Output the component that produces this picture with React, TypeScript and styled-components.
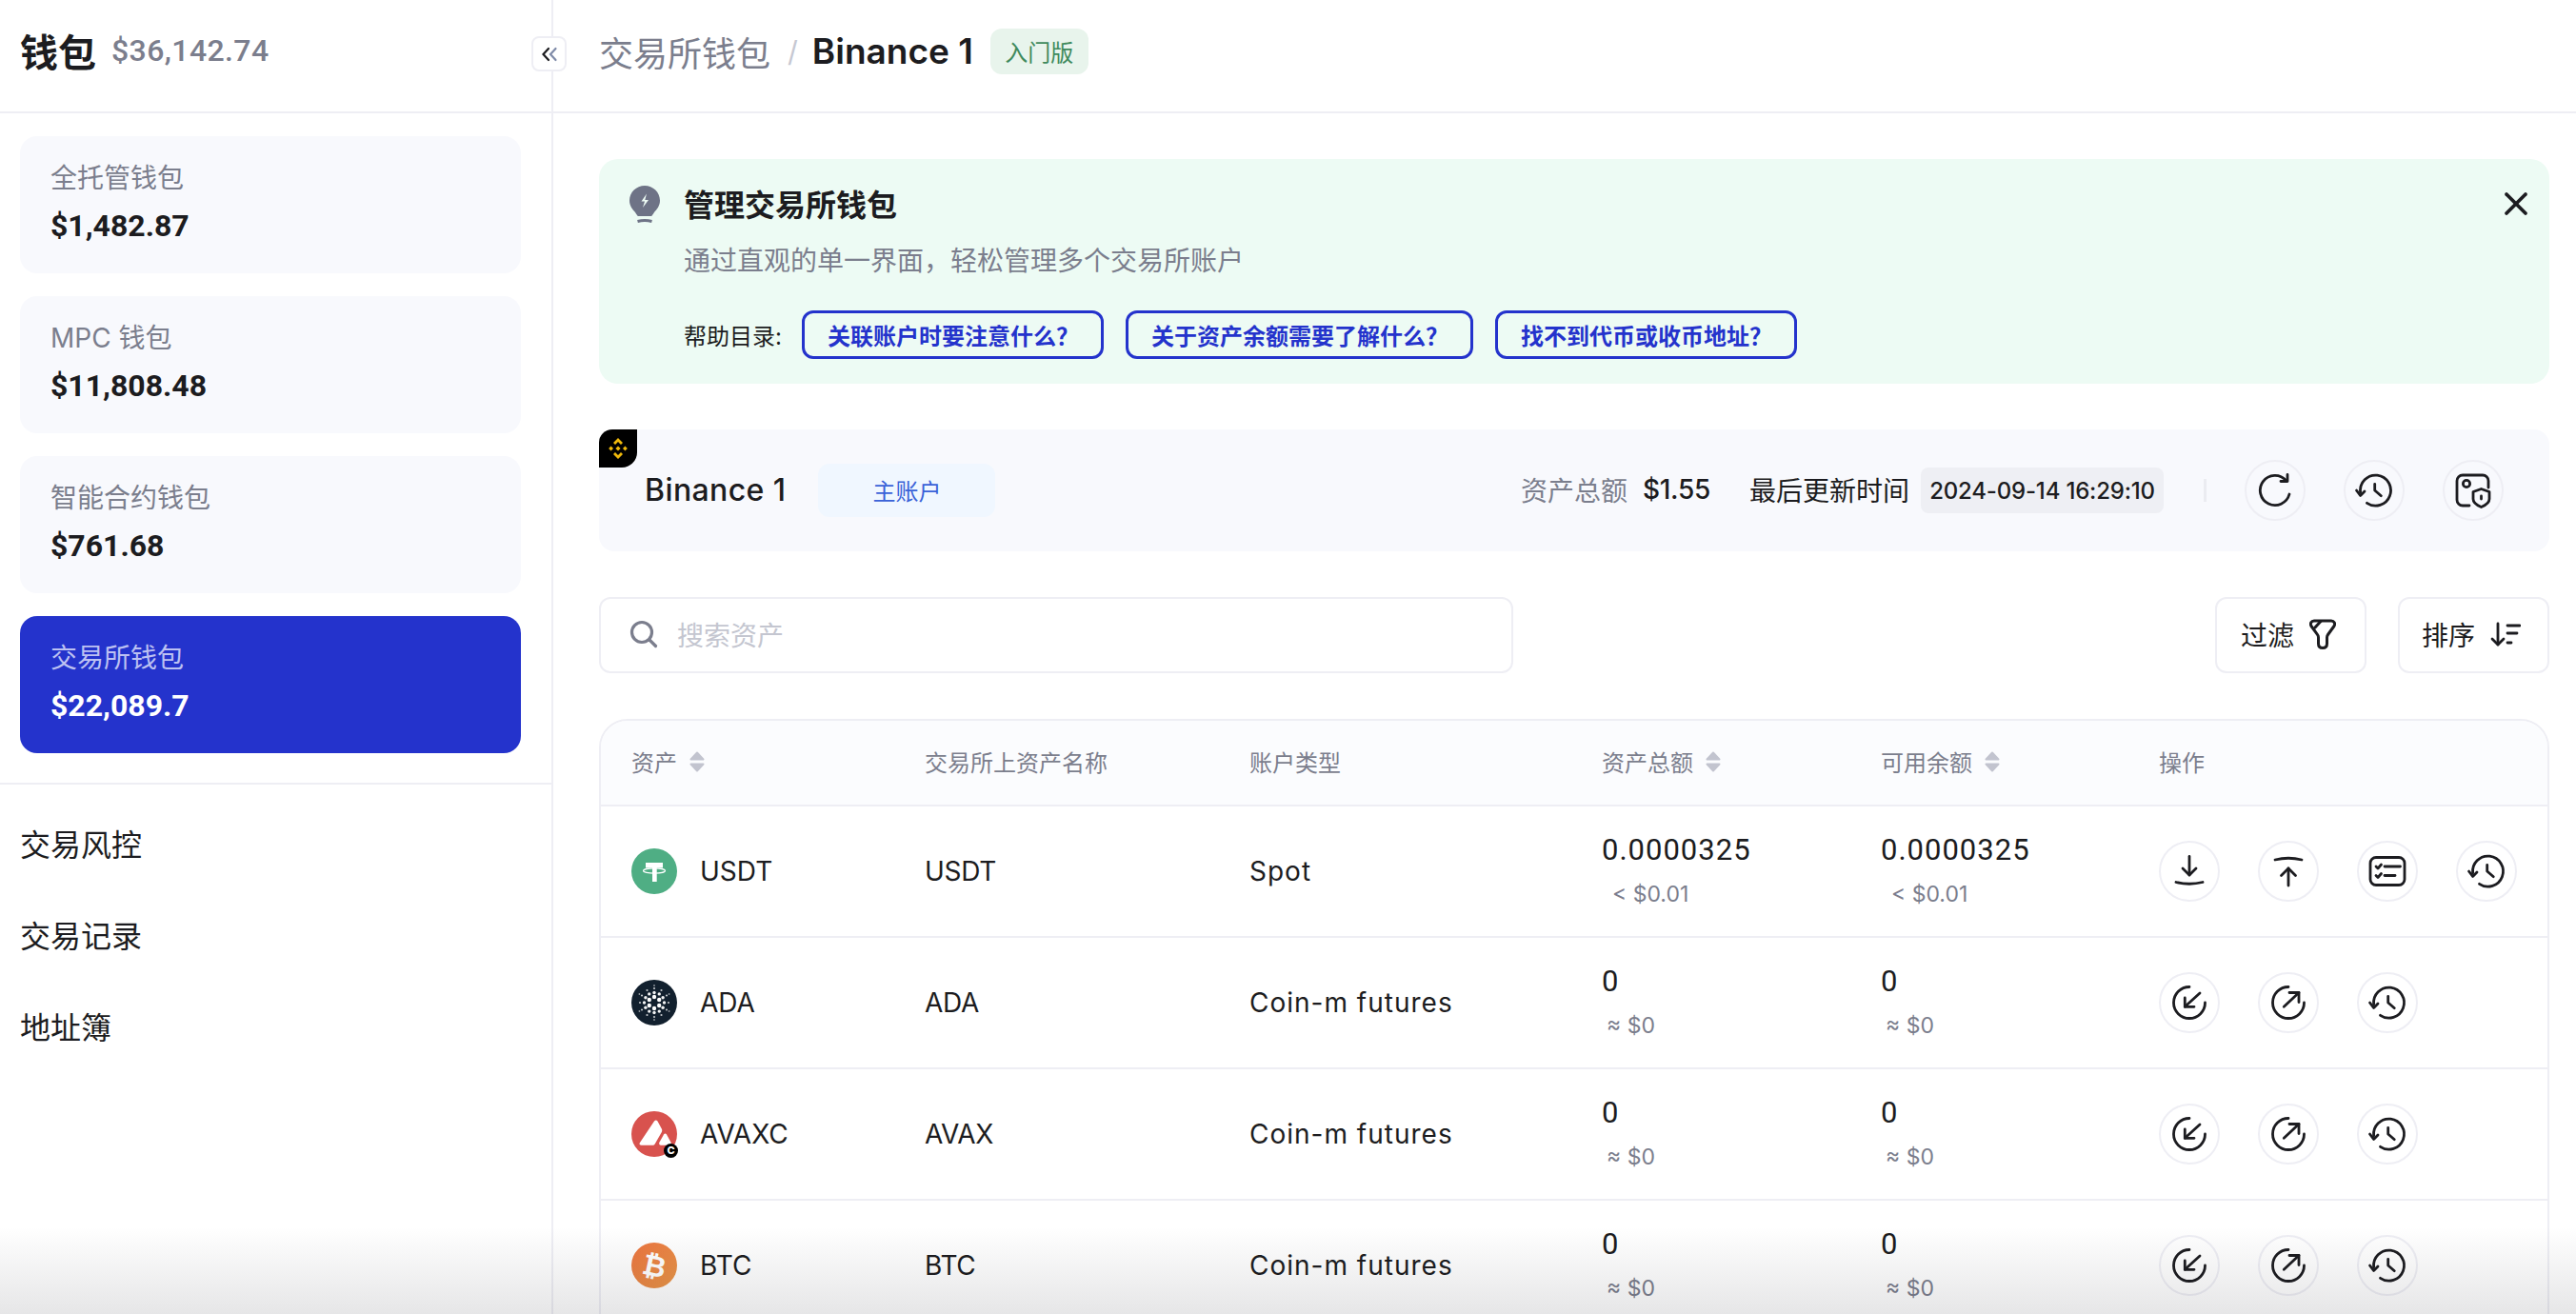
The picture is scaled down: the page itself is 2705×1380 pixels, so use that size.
import React from "react";
import styled, { createGlobalStyle } from "styled-components";

const INK = "#1c1c20";
const GREY = "#7b7e8d";
const LINE = "#eeeef4";
const BRAND = "#2433cc";
const SANS = `Inter, "Noto Sans CJK SC", sans-serif`;
const DIGITS = `Roboto, "Noto Sans CJK SC", sans-serif`;

const GlobalStyle = createGlobalStyle`
  html, body { margin: 0; padding: 0; background: #fff; }
  body { font-family: ${SANS}; color: ${INK}; }
  * { box-sizing: border-box; }
`;

const Page = styled.div`
  position: relative;
  display: flex;
  width: 2705px;
  height: 1380px;
  overflow: hidden;
`;

const BottomFade = styled.div`
  position: absolute;
  left: 0;
  right: 0;
  bottom: 0;
  height: 92px;
  background: linear-gradient(rgba(20, 20, 30, 0), rgba(20, 20, 30, 0.105));
  pointer-events: none;
`;

/* sidebar */
const Sidebar = styled.aside`
  position: relative;
  flex: 0 0 581px;
  border-right: 2px solid ${LINE};
`;

const SideHead = styled.div`
  display: flex;
  align-items: center;
  gap: 16px;
  height: 119px;
  padding: 0 21px 12px;
  border-bottom: 2px solid ${LINE};
`;

const SideTitle = styled.h1`
  margin: 0;
  font-size: 40px;
  font-weight: 700;
`;

const SideTotal = styled.span`
  font-family: ${DIGITS};
  font-size: 32px;
  font-weight: 500;
  letter-spacing: 0.4px;
  color: ${GREY};
`;

const CollapseButton = styled.button`
  position: absolute;
  top: 38px;
  left: 558px;
  display: flex;
  align-items: center;
  justify-content: center;
  width: 37px;
  height: 37px;
  padding: 0;
  background: #fff;
  border: 2px solid ${LINE};
  border-radius: 8px;
`;

const CardList = styled.div`
  display: flex;
  flex-direction: column;
  gap: 24px;
  padding: 24px 32px 31px 21px;
  border-bottom: 2px solid ${LINE};
`;

const WalletCard = styled.div<{ $active?: boolean }>`
  height: 144px;
  padding: 26px 32px;
  border-radius: 18px;
  background: ${(p) => (p.$active ? BRAND : "#f8f9fd")};
  color: ${(p) => (p.$active ? "#fff" : INK)};
`;

const CardLabel = styled.div<{ $active?: boolean }>`
  font-size: 28px;
  line-height: 36px;
  color: ${(p) => (p.$active ? "#bcc1f2" : GREY)};
`;

const CardValue = styled.div`
  margin-top: 12px;
  font-family: ${DIGITS};
  font-size: 32px;
  line-height: 40px;
  font-weight: 700;
`;

const Menu = styled.nav`
  padding-top: 16px;
`;

const MenuItem = styled.div`
  height: 96px;
  padding-left: 21px;
  font-size: 32px;
  line-height: 96px;
`;

/* main */
const Main = styled.main`
  flex: 1;
  min-width: 0;
`;

const TopBar = styled.header`
  display: flex;
  align-items: center;
  height: 119px;
  padding: 0 0 10px 48px;
  border-bottom: 2px solid ${LINE};
`;

const Crumb = styled.span`
  font-size: 36px;
  color: ${GREY};
`;

const CrumbSlash = styled.span`
  margin: 0 15px 0 18px;
  font-size: 30px;
  color: #c6c8d2;
`;

const CrumbCurrent = styled.span`
  font-size: 37px;
  font-weight: 600;
`;

const PlanBadge = styled.span`
  display: flex;
  align-items: center;
  justify-content: center;
  width: 103px;
  height: 48px;
  margin-left: 18px;
  font-size: 24px;
  color: #3f8a5c;
  background: #e8f4ec;
  border-radius: 12px;
`;

const Content = styled.div`
  display: flex;
  flex-direction: column;
  gap: 48px;
  padding: 48px 28px 0 48px;
`;

const Banner = styled.section`
  position: relative;
  height: 236px;
  padding: 26px 32px;
  background: #edfbf4;
  border-radius: 20px;
`;

const BannerHead = styled.div`
  display: flex;
  align-items: center;
  gap: 25px;
  height: 44px;
`;

const BannerTitle = styled.h2`
  margin: -4px 0 0;
  font-size: 32px;
  font-weight: 700;
`;

const BannerText = styled.p`
  margin: 17px 0 0 57px;
  font-size: 28px;
  line-height: 40px;
  color: ${GREY};
`;

const HelpRow = styled.div`
  display: flex;
  align-items: center;
  gap: 23px;
  margin: 32px 0 0 57px;
`;

const HelpLabel = styled.span`
  width: 101px;
  font-size: 24px;
  white-space: nowrap;
`;

const HelpLink = styled.a`
  display: flex;
  align-items: center;
  height: 51px;
  padding: 0 23px 0 24px;
  font-size: 24px;
  font-weight: 700;
  color: ${BRAND};
  border: 3px solid ${BRAND};
  border-radius: 12px;
`;

const CloseButton = styled.button`
  position: absolute;
  top: 34px;
  right: 22px;
  display: flex;
  padding: 0;
  background: none;
  border: 0;
`;

const AccountBar = styled.section`
  position: relative;
  display: flex;
  align-items: center;
  height: 128px;
  padding: 0 48px;
  background: #f8f9fd;
  border-radius: 16px;
`;

const ExchangeTag = styled.div`
  position: absolute;
  top: 0;
  left: 0;
  display: flex;
  align-items: center;
  justify-content: center;
  width: 40px;
  height: 40px;
  background: #000;
  border-radius: 14px 0 16px 0;
`;

const AccountName = styled.span`
  margin-top: -2px;
  font-size: 32px;
  font-weight: 500;
  letter-spacing: 0.4px;
`;

const AccountType = styled.span`
  display: flex;
  align-items: center;
  justify-content: center;
  width: 186px;
  height: 56px;
  margin-left: 34px;
  padding-bottom: 2px;
  font-size: 24px;
  color: #3a62d8;
  background: #f0f7ff;
  border-radius: 12px;
`;

const Spacer = styled.div`
  flex: 1;
`;

const StatLabel = styled.span<{ $dark?: boolean }>`
  margin-top: -2px;
  font-size: 28px;
  color: ${(p) => (p.$dark ? INK : GREY)};
`;

const StatValue = styled.span`
  margin: -2px 41px 0 16px;
  font-size: 28px;
  font-weight: 500;
  letter-spacing: -0.3px;
`;

const TimeChip = styled.span`
  display: flex;
  align-items: center;
  justify-content: center;
  width: 255px;
  height: 48px;
  margin-left: 12px;
  font-size: 24px;
  font-weight: 500;
  letter-spacing: -0.2px;
  background: #eeeff4;
  border-radius: 8px;
`;

const BarDivider = styled.span`
  width: 3px;
  height: 24px;
  margin: 0 40px 0 42px;
  background: #ebecf1;
`;

const IconRow = styled.div`
  display: flex;
  gap: 40px;
`;

const CircleButton = styled.button`
  display: flex;
  align-items: center;
  justify-content: center;
  flex: none;
  width: 64px;
  height: 64px;
  padding: 0;
  background: transparent;
  border: 2px solid ${LINE};
  border-radius: 50%;

  svg {
    overflow: visible;
  }
`;

const Toolbar = styled.div`
  display: flex;
  align-items: stretch;
  height: 80px;
`;

const SearchBox = styled.div`
  display: flex;
  align-items: center;
  gap: 20px;
  width: 960px;
  padding: 0 0 2px 30px;
  font-size: 28px;
  color: #c4c6d0;
  border: 2px solid ${LINE};
  border-radius: 12px;
`;

const ToolButton = styled.button<{ $gap?: number }>`
  display: flex;
  align-items: center;
  justify-content: center;
  gap: 16px;
  width: 159px;
  margin-left: ${(p) => p.$gap ?? 0}px;
  padding: 0 5px 2px 0;
  font-family: ${SANS};
  font-size: 28px;
  color: ${INK};
  background: #fff;
  border: 2px solid ${LINE};
  border-radius: 12px;
`;

const Table = styled.div`
  border: 2px solid ${LINE};
  border-radius: 30px 30px 0 0;
  overflow: hidden;
`;

const COLUMNS = "308px 341px 370px 293px 292px 1fr";

const HeadRow = styled.div`
  display: grid;
  grid-template-columns: ${COLUMNS};
  align-items: center;
  height: 90px;
  padding: 0 0 3px 32px;
  font-size: 24px;
  color: ${GREY};
  background: #fbfcfe;
  border-bottom: 2px solid ${LINE};
`;

const HeadCell = styled.div`
  display: flex;
  align-items: center;
  gap: 13px;
`;

const Row = styled.div`
  display: grid;
  grid-template-columns: ${COLUMNS};
  align-items: center;
  height: 138px;
  padding-left: 32px;
  font-size: 28px;
  border-bottom: 2px solid ${LINE};
`;

const AssetCell = styled.div`
  display: flex;
  align-items: center;
  gap: 24px;
`;

const ExchangeCell = styled.div`
  letter-spacing: -0.3px;
`;

const TypeCell = styled.div`
  letter-spacing: 1px;
`;

const CoinWrap = styled.div`
  position: relative;
  width: 48px;
  height: 48px;
`;

const CoinMark = styled.div`
  position: absolute;
  right: -1px;
  bottom: -1px;
  display: flex;
  align-items: center;
  justify-content: center;
  width: 15px;
  height: 15px;
  font-size: 11px;
  font-weight: 800;
  line-height: 1;
  color: #fff;
  background: #000;
  border-radius: 50%;
`;

const BitcoinCoin = styled.div`
  display: flex;
  align-items: center;
  justify-content: center;
  width: 48px;
  height: 48px;
  font-family: "DejaVu Sans", sans-serif;
  font-size: 30px;
  font-weight: 700;
  color: #fff;
  background: linear-gradient(135deg, #ec7440, #e99748);
  border-radius: 50%;

  span {
    transform: rotate(12deg);
  }
`;

const AmountCell = styled.div`
  display: flex;
  flex-direction: column;
  gap: 12px;
  margin-top: -2px;
`;

const Amount = styled.span`
  font-family: ${DIGITS};
  font-size: 31px;
  line-height: 38px;
  letter-spacing: 1px;
`;

const AmountSub = styled.span<{ $indent: number }>`
  margin-left: ${(p) => p.$indent}px;
  font-size: 23px;
  line-height: 30px;
  color: ${GREY};
`;

const Stroke = styled.svg.attrs({
  fill: "none",
  stroke: INK,
  strokeLinecap: "round",
  strokeLinejoin: "round",
})``;

const ICONS: Record<string, React.ReactNode> = {
  refresh: (
    <>
      <path d="M33 22A15.6 15.6 0 1 1 29.5 7.5" />
      <path d="M31 1.5V8.5H24" />
    </>
  ),
  history: (
    <>
      <path d="M10.5 31.3A16 16 0 1 0 3.6 20" />
      <path d="M-.5 18L3.6 23.5L8 19" />
      <path d="M18.7 11.3V18L25.3 23.7" />
    </>
  ),
  shield: (
    <>
      <path d="M14 34H7A6 6 0 0 1 1 28V8A6 6 0 0 1 7 2H28A6 6 0 0 1 34 8V15" />
      <circle cx="11" cy="11" r="3.6" />
      <path d="M26.5 16.5L35 19.5V27C35 31 31.5 33.5 26.5 35.5C21.5 33.5 18 31 18 27V19.5Z" />
      <path d="M26.5 24V27" />
    </>
  ),
  deposit: (
    <>
      <path d="M18 2.5V22" />
      <path d="M11 15L18 22L25 15" />
      <path d="M4 29.5Q18 33 32 29.5" />
    </>
  ),
  withdraw: (
    <>
      <path d="M4 6Q18 2.5 32 6" />
      <path d="M18 33V15" />
      <path d="M10.5 22.5L18 15L25.5 22.5" />
    </>
  ),
  list: (
    <>
      <rect x="0" y="3.5" width="36" height="29" rx="6" />
      <path d="M15 13H31.5" />
      <path d="M15 22.5H26" />
      <path d="M6 13L8 15L11.5 11" />
      <path d="M6 22.5L8 24.5L11.5 20.5" />
    </>
  ),
  receive: (
    <>
      <path d="M18 1.5A16.5 16.5 0 1 0 34.5 18" />
      <path d="M29 8L13.3 22.3" />
      <path d="M13.3 13V22.3H23" />
    </>
  ),
  send: (
    <>
      <path d="M18 1.5A16.5 16.5 0 1 0 34.5 18" />
      <path d="M13.3 22.3L29 7.5" />
      <path d="M19 7.5H29V17.5" />
    </>
  ),
};

const ActionIcon = ({ name }: { name: string }) => (
  <CircleButton>
    <Stroke width={36} height={36} viewBox="0 0 36 36" strokeWidth={2.8}>
      {ICONS[name]}
    </Stroke>
  </CircleButton>
);

const SortCaret = () => (
  <svg width="16" height="22" viewBox="0 0 16 22" fill="#c2c4cf" stroke="#c2c4cf" strokeWidth="2" strokeLinejoin="round">
    <path d="M8 1.5L14.5 8.5H1.5Z" />
    <path d="M8 20.5L1.5 13.5H14.5Z" />
  </svg>
);

const TetherCoin = () => (
  <svg width="48" height="48" viewBox="0 0 48 48">
    <circle cx="24" cy="24" r="24" fill="#4fae84" />
    <path d="M15 15H33V20.5H26.7V35H22V20.5H15Z" fill="#fff" />
    <ellipse cx="24" cy="23.5" rx="11.5" ry="2.6" fill="none" stroke="#fff" strokeWidth="1.2" />
  </svg>
);

const CardanoCoin = () => {
  const dots: React.ReactNode[] = [];
  // rings of dots, getting smaller toward the rim
  [
    { r: 6, n: 6, s: 2.2, o: 1 },
    { r: 10.5, n: 12, s: 1.7, o: 0.95 },
    { r: 15, n: 12, s: 1.1, o: 0.75 },
    { r: 18, n: 6, s: 0.9, o: 0.55 },
  ].forEach((ring) => {
    for (let i = 0; i < ring.n; i++) {
      const a = (i / ring.n) * Math.PI * 2 + Math.PI / 6;
      dots.push(
        <circle
          key={`${ring.r}-${i}`}
          cx={24 + ring.r * Math.cos(a)}
          cy={24 + ring.r * Math.sin(a)}
          r={ring.s}
          fill="#fff"
          opacity={ring.o}
        />,
      );
    }
  });
  return (
    <svg width="48" height="48" viewBox="0 0 48 48">
      <circle cx="24" cy="24" r="24" fill="#12202e" />
      {dots}
    </svg>
  );
};

const AvalancheCoin = () => (
  <svg width="48" height="48" viewBox="0 0 48 48">
    <circle cx="24" cy="24" r="24" fill="#d8524e" />
    <path
      d="M24 10.5C25 9 26.5 9 27.5 10.5L31.8 18.5C32.4 19.6 32.4 20.8 31.8 21.9L24.8 34.2C24.2 35.2 23.3 35.7 22.2 35.7H10.5C8.8 35.7 8 34.5 8.8 33.2Z"
      fill="#fff"
    />
    <path
      d="M34 24.5C34.8 23.2 36.2 23.2 37 24.5L41.5 32.8C42.2 34.2 41.5 35.7 39.8 35.7H31C29.4 35.7 28.7 34.2 29.4 32.8Z"
      fill="#fff"
    />
  </svg>
);

const BinanceMark = () => (
  <svg width="24" height="24" viewBox="0 0 24 24" fill="#f0b90b">
    <path d="M12 1L17 6L15 8L12 5L9 8L7 6Z" />
    <path d="M12 23L17 18L15 16L12 19L9 16L7 18Z" />
    <path d="M2.2 12L4.6 9.6L7 12L4.6 14.4Z" />
    <path d="M17 12L19.4 9.6L21.8 12L19.4 14.4Z" />
    <path d="M12 9.4L14.6 12L12 14.6L9.4 12Z" />
  </svg>
);

const wallets = [
  { label: "全托管钱包", value: "$1,482.87" },
  { label: "MPC 钱包", value: "$11,808.48" },
  { label: "智能合约钱包", value: "$761.68" },
  { label: "交易所钱包", value: "$22,089.7", active: true },
];

const helpLinks = [
  "关联账户时要注意什么\uFF1F",
  "关于资产余额需要了解什么\uFF1F",
  "找不到代币或收币地址\uFF1F",
];

const FUTURES_ACTIONS = ["receive", "send", "history"];

const rows = [
  {
    coin: <TetherCoin />,
    name: "USDT",
    exchangeName: "USDT",
    type: "Spot",
    amount: "0.0000325",
    fiat: "< $0.01",
    indent: 11,
    actions: ["deposit", "withdraw", "list", "history"],
  },
  {
    coin: <CardanoCoin />,
    name: "ADA",
    exchangeName: "ADA",
    type: "Coin-m futures",
    amount: "0",
    fiat: "≈ $0",
    indent: 5,
    actions: FUTURES_ACTIONS,
  },
  {
    coin: (
      <>
        <AvalancheCoin />
        <CoinMark>C</CoinMark>
      </>
    ),
    name: "AVAXC",
    exchangeName: "AVAX",
    type: "Coin-m futures",
    amount: "0",
    fiat: "≈ $0",
    indent: 5,
    actions: FUTURES_ACTIONS,
  },
  {
    coin: (
      <BitcoinCoin>
        <span>₿</span>
      </BitcoinCoin>
    ),
    name: "BTC",
    exchangeName: "BTC",
    type: "Coin-m futures",
    amount: "0",
    fiat: "≈ $0",
    indent: 5,
    actions: FUTURES_ACTIONS,
  },
];

const App: React.FC = () => (
  <Page>
    <GlobalStyle />
    <Sidebar>
      <SideHead>
        <SideTitle>钱包</SideTitle>
        <SideTotal>$36,142.74</SideTotal>
      </SideHead>
      <CollapseButton>
        <svg width="18" height="16" viewBox="0 0 18 16" fill="none" strokeWidth="2.2" strokeLinecap="round">
          <path d="M8 2L2.5 8L8 14" stroke={INK} />
          <path d="M15.5 2L10 8L15.5 14" stroke="#7f8ba8" />
        </svg>
      </CollapseButton>
      <CardList>
        {wallets.map((w) => (
          <WalletCard key={w.label} $active={w.active}>
            <CardLabel $active={w.active}>{w.label}</CardLabel>
            <CardValue>{w.value}</CardValue>
          </WalletCard>
        ))}
      </CardList>
      <Menu>
        <MenuItem>交易风控</MenuItem>
        <MenuItem>交易记录</MenuItem>
        <MenuItem>地址簿</MenuItem>
      </Menu>
    </Sidebar>

    <Main>
      <TopBar>
        <Crumb>交易所钱包</Crumb>
        <CrumbSlash>/</CrumbSlash>
        <CrumbCurrent>Binance 1</CrumbCurrent>
        <PlanBadge>入门版</PlanBadge>
      </TopBar>

      <Content>
        <Banner>
          <BannerHead>
            <svg width="32" height="40" viewBox="0 0 32 40">
              <path
                d="M16 0C24.8 0 32 7 32 15.5C32 21.5 28.5 25 26 28C24.5 30 24 31.5 23 32H9C8 31.5 7.5 30 6 28C3.5 25 0 21.5 0 15.5C0 7 7.2 0 16 0Z"
                fill="#6e7386"
              />
              <path d="M8.5 37.5Q16 35.5 23.5 37.5" fill="none" stroke="#6e7386" strokeWidth="3" />
              <path d="M18 8.5L12.5 16.5H16L14 23L20 15H16.3Z" fill="#edfbf4" />
            </svg>
            <BannerTitle>管理交易所钱包</BannerTitle>
          </BannerHead>
          <BannerText>{"通过直观的单一界面\uFF0C轻松管理多个交易所账户"}</BannerText>
          <HelpRow>
            <HelpLabel>帮助目录:</HelpLabel>
            {helpLinks.map((text) => (
              <HelpLink key={text}>{text}</HelpLink>
            ))}
          </HelpRow>
          <CloseButton>
            <Stroke width={26} height={26} viewBox="0 0 26 26" strokeWidth={3.8}>
              <path d="M3 3L23 23" />
              <path d="M23 3L3 23" />
            </Stroke>
          </CloseButton>
        </Banner>

        <AccountBar>
          <ExchangeTag>
            <BinanceMark />
          </ExchangeTag>
          <AccountName>Binance 1</AccountName>
          <AccountType>主账户</AccountType>
          <Spacer />
          <StatLabel>资产总额</StatLabel>
          <StatValue>$1.55</StatValue>
          <StatLabel $dark>最后更新时间</StatLabel>
          <TimeChip>2024-09-14 16:29:10</TimeChip>
          <BarDivider />
          <IconRow>
            <ActionIcon name="refresh" />
            <ActionIcon name="history" />
            <ActionIcon name="shield" />
          </IconRow>
        </AccountBar>

        <Toolbar>
          <SearchBox>
            <svg width="30" height="30" viewBox="0 0 30 30" fill="none" stroke="#7b7e8d" strokeWidth="3.2" strokeLinecap="round">
              <circle cx="13" cy="13" r="10.5" />
              <path d="M21 21L27.5 27.5" />
            </svg>
            搜索资产
          </SearchBox>
          <Spacer />
          <ToolButton>
            过滤
            <Stroke width={28} height={32} viewBox="0 0 28 32" strokeWidth={3}>
              <path d="M5 2H23C26 2 27.5 5 26 7.5L19.5 16.5C18.8 17.5 18.5 18.5 18.5 19.5V26C18.5 29 16.5 30.5 14 30.5C11.5 30.5 9.5 29 9.5 26V19.5C9.5 18.5 9.2 17.5 8.5 16.5L2 7.5C0.5 5 2 2 5 2Z" />
              <path d="M12 2.5L6 9" />
            </Stroke>
          </ToolButton>
          <ToolButton $gap={33}>
            排序
            <Stroke width={32} height={30} viewBox="0 0 32 30" strokeWidth={2.8}>
              <path d="M8 4V26" />
              <path d="M2 20L8 26L14 20" />
              <path d="M18 6H31" />
              <path d="M18 14H28" />
              <path d="M18 24H22" />
            </Stroke>
          </ToolButton>
        </Toolbar>

        <Table>
          <HeadRow>
            <HeadCell>
              资产
              <SortCaret />
            </HeadCell>
            <HeadCell>交易所上资产名称</HeadCell>
            <HeadCell>账户类型</HeadCell>
            <HeadCell>
              资产总额
              <SortCaret />
            </HeadCell>
            <HeadCell>
              可用余额
              <SortCaret />
            </HeadCell>
            <HeadCell>操作</HeadCell>
          </HeadRow>
          {rows.map((r) => (
            <Row key={r.name}>
              <AssetCell>
                <CoinWrap>{r.coin}</CoinWrap>
                {r.name}
              </AssetCell>
              <ExchangeCell>{r.exchangeName}</ExchangeCell>
              <TypeCell>{r.type}</TypeCell>
              <AmountCell>
                <Amount>{r.amount}</Amount>
                <AmountSub $indent={r.indent}>{r.fiat}</AmountSub>
              </AmountCell>
              <AmountCell>
                <Amount>{r.amount}</Amount>
                <AmountSub $indent={r.indent}>{r.fiat}</AmountSub>
              </AmountCell>
              <IconRow>
                {r.actions.map((a) => (
                  <ActionIcon key={a} name={a} />
                ))}
              </IconRow>
            </Row>
          ))}
        </Table>
      </Content>
    </Main>
    <BottomFade />
  </Page>
);

export default App;
